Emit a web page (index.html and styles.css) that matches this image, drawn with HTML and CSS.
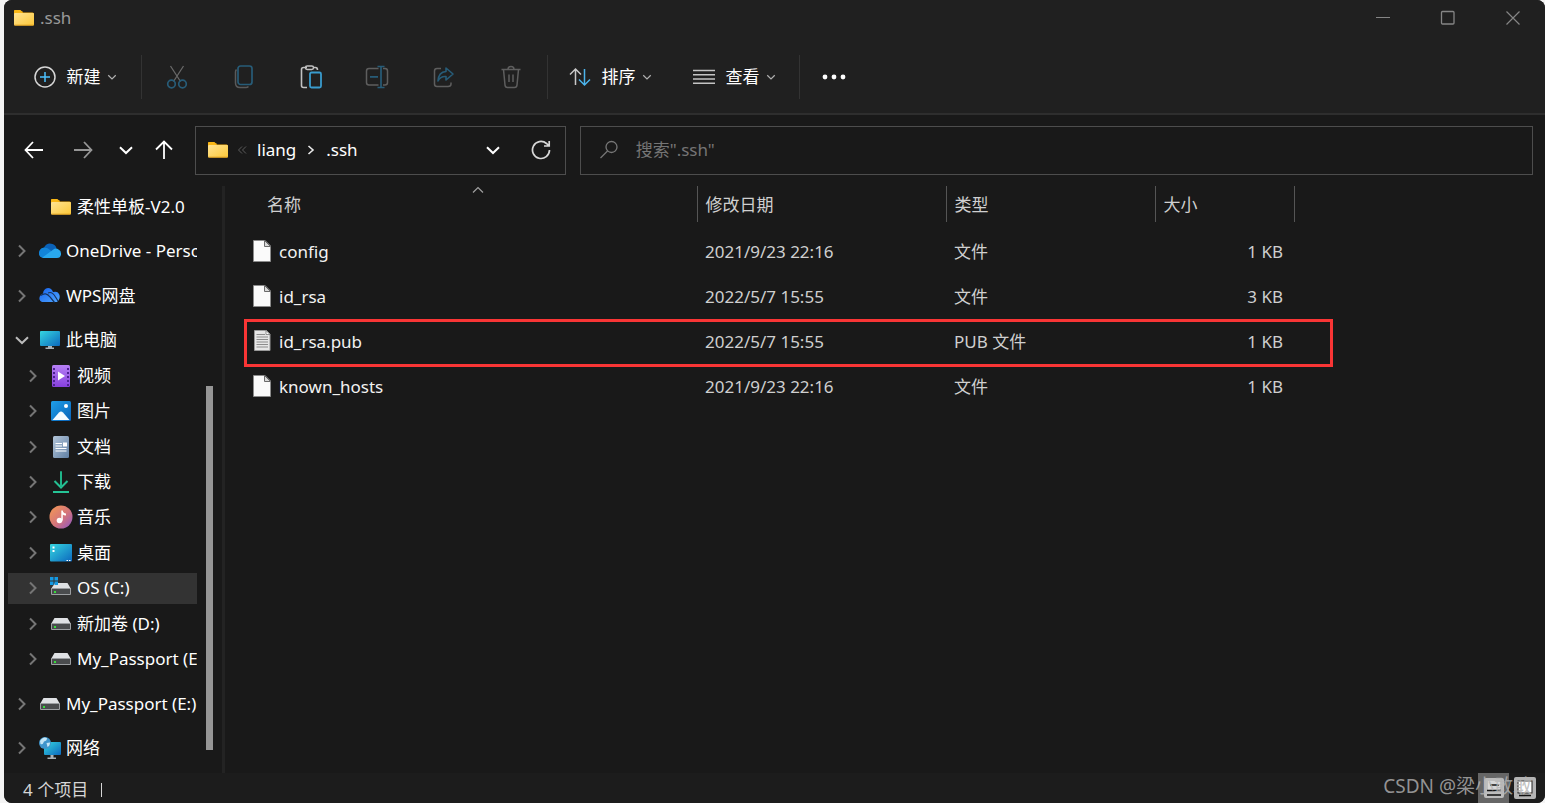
FILE: index.html
```html
<!DOCTYPE html>
<html lang="zh-CN">
<head>
<meta charset="utf-8">
<title>.ssh</title>
<link rel="stylesheet" href="styles.css">
</head>
<body>
<svg class="defs" width="0" height="0" aria-hidden="true">
  <defs>
    <linearGradient id="gFolder" x1="0" y1="0" x2="1" y2="1"><stop offset="0" stop-color="#ffe393"/><stop offset="1" stop-color="#fcc838"/></linearGradient>
    <linearGradient id="gScreen" x1="0" y1="0" x2="1" y2="1"><stop offset="0" stop-color="#35d6e0"/><stop offset="1" stop-color="#0c68be"/></linearGradient>
    <linearGradient id="gVideo" x1="0" y1="0" x2="0" y2="1"><stop offset="0" stop-color="#b680f5"/><stop offset="1" stop-color="#8640dc"/></linearGradient>
    <linearGradient id="gPic" x1="0" y1="0" x2="1" y2="1"><stop offset="0" stop-color="#1f9fe8"/><stop offset="1" stop-color="#0862b8"/></linearGradient>
    <linearGradient id="gDoc" x1="0" y1="0" x2="1" y2="1"><stop offset="0" stop-color="#b4c6da"/><stop offset="1" stop-color="#5f7fa3"/></linearGradient>
    <linearGradient id="gMusic" x1="0" y1="0" x2="1" y2="1"><stop offset="0" stop-color="#f59a52"/><stop offset=".55" stop-color="#d4747c"/><stop offset="1" stop-color="#8a55c8"/></linearGradient>
    <linearGradient id="gDown" x1="0" y1="0" x2="0" y2="1"><stop offset="0" stop-color="#1fae84"/><stop offset="1" stop-color="#25c496"/></linearGradient>
    <linearGradient id="gWps" x1="0" y1="0" x2="1" y2="1"><stop offset="0" stop-color="#1562ee"/><stop offset="1" stop-color="#4fa5ff"/></linearGradient>
    <symbol id="folder" viewBox="0 0 22 18"><path d="M1 2.500Q1 1 2.500 1H7.500L10 3.500H19.500Q21 3.500 21 5V8H1Z" fill="#f5ae12"/><rect x="1" y="4" width="20" height="12.500" rx="1" fill="url(#gFolder)"/><path d="M1 4H8L10 2.500H7V1H2Q1 1 1 2Z" fill="#f9b716"/><path d="M1.500 16.200H20.500" stroke="#dd9e20"/></symbol>
    <symbol id="right" viewBox="0 0 16 16"><path d="M5 2.500 10.500 8 5 13.500" fill="none" stroke="currentColor" stroke-width="2"/></symbol>
    <symbol id="down" viewBox="0 0 16 16"><path d="M2 5.200 8 11 14 5.200" fill="none" stroke="currentColor" stroke-width="2"/></symbol>
    <symbol id="onedrive" viewBox="0 0 24 18"><path d="M1 13Q0 7 6 5.500 9 0 14.500 2 18 3 18.500 6.500L9 13Z" fill="#0a62b8"/><path d="M5.500 16Q.5 15.500 1 10.500 2.200 6 6 5.800 9 5 12 8L16 12Z" fill="#1284d8"/><path d="M4 15.800 15 7.800Q18 5.300 20.500 7.600 23.500 8.600 23 12.500 22.500 16 19 16H6Z" fill="#29a8ee"/></symbol>
    <symbol id="wps" viewBox="0 0 24 18"><path d="M2 9Q3 7 5 6.500 5.500 1.500 10 1 13.500 1.200 15 5 20 3.500 21.500 8 22.500 12 19 15H4Q0 13 2 9Z" fill="url(#gWps)"/><path d="M2.500 8.500Q8 4.500 12 10L16.500 15.500" fill="none" stroke="#17335e" stroke-width="1.200"/><path d="M10 6Q14 4 17.500 10L20 14" fill="none" stroke="#17335e" stroke-width="1.200"/></symbol>
    <symbol id="pc" viewBox="0 0 22 20"><rect x="1" y="1" width="20" height="15" rx="1" fill="url(#gScreen)"/><path d="M9 16h4v1.500h2V19H6.500v-1.500H9z" fill="#a9b2b8"/></symbol>
    <symbol id="video" viewBox="0 0 24 24"><rect x="3" y="1" width="18" height="22" rx="1.500" fill="url(#gVideo)"/><path d="M5 4v18M19 4v18" stroke="#4c2091" stroke-width="2" stroke-dasharray="2 2"/><path d="M9 7.500 16 12 9 16.500Z" fill="#fff"/></symbol>
    <symbol id="picture" viewBox="0 0 24 24"><rect x="2" y="2" width="20" height="20" rx="1.500" fill="url(#gPic)"/><path d="M3.500 21 10 13.500Q12 11.500 14 13.500L20.500 21Z" fill="#f5fbff"/><circle cx="17" cy="7" r="2" fill="#fff"/></symbol>
    <symbol id="document" viewBox="0 0 24 24"><rect x="4" y="1" width="16" height="22" rx="1.500" fill="url(#gDoc)"/><path d="M6.500 8.500H13M6.500 11H13M6.500 13.500H17.500M6.500 16H17.500" stroke="#fff" stroke-width="1.200"/><rect x="14" y="7.500" width="4" height="4" fill="#fff"/></symbol>
    <symbol id="download" viewBox="0 0 24 24"><path d="M12 1.500V17M5.500 11 12 17.500 18.500 11" fill="none" stroke="url(#gDown)" stroke-width="2"/><path d="M12 1.500V17" stroke="#20b58a" stroke-width="2"/><path d="M4 22H20" stroke="#25c496" stroke-width="2"/></symbol>
    <symbol id="music" viewBox="0 0 24 24"><circle cx="12" cy="12" r="11.500" fill="url(#gMusic)"/><circle cx="10.500" cy="15.500" r="2.800" fill="#fff"/><path d="M12.300 15.500V5.500H13.800Q14 8 17 8.500V10.500Q14.500 10.500 13.800 9.500V15.500Z" fill="#fff"/></symbol>
    <symbol id="desktop" viewBox="0 0 24 20"><rect x="1" y="1" width="22" height="17.500" rx="1" fill="url(#gScreen)"/><path d="M3.500 3.500h2v2h-2zM3.500 7h2v2h-2zM17.500 17h1.500v1h-1.500zM20 17h1.500v1H20z" fill="#fff"/></symbol>
    <symbol id="drive" viewBox="0 0 22 16"><path d="M4.500 2H17.500L21 8H1Z" fill="#dfe1e4"/><rect x="1" y="7" width="20" height="7" rx="1" fill="#9c9fa2"/><rect x="2" y="8" width="18" height="5" fill="#4a4c4e"/><rect x="4" y="10" width="2" height="2" fill="#35e03a"/></symbol>
    <symbol id="osdrive" viewBox="0 0 24 22"><path d="M6 6H18.500L22 12H2Z" fill="#dfe1e4"/><rect x="2" y="11" width="20" height="7" rx="1" fill="#9c9fa2"/><rect x="3" y="12" width="18" height="5" fill="#4a4c4e"/><rect x="5" y="14" width="2" height="2" fill="#35e03a"/><path d="M1 0h3.500v3.500H1zM5.500 0H9v3.500H5.500zM1 4.500h3.500V8H1zM5.500 4.500H9V8H5.500z" fill="#159ae4"/></symbol>
    <symbol id="network" viewBox="0 0 24 24"><rect x="6" y="6" width="17" height="13" rx="1" fill="url(#gScreen)"/><path d="M12.500 19h3v2.500H18V23H9.500v-1.500h3z" fill="#a9b2b8"/><circle cx="7" cy="7" r="6" fill="#3f95cc"/><path d="M2 5Q5 0 9 2 9 5 6 5.500 5 9 2.500 8ZM8.500 7 12 6.500Q12 10 9.500 11Z" fill="#c4e5f5"/></symbol>
    <symbol id="file" viewBox="0 0 20 24"><path d="M1.500 .5H13L18.500 6V21.500H1.500Z" fill="#fafafa" stroke="#8b8b8b"/><path d="M12.500 .5V6.500H18.500Z" fill="#d8d8d8" stroke="#6a6a6a"/></symbol>
    <symbol id="textfile" viewBox="0 0 20 24"><path d="M2.500 .5H14.500L18 4V20.500H2.500Z" fill="#e6e6e6" stroke="#999"/><path d="M4.500 4.500H13M4.500 7H16M4.500 9.500H16M4.500 12H16M4.500 14.500H16M4.500 17H16" stroke="#8c8c8c"/><path d="M14 .5V4.500H18Z" fill="#fff" stroke="#777" stroke-width=".8"/></symbol>
  </defs>
</svg>

<div class="window">
  <header class="titlebar">
    <svg class="i-folder"><use href="#folder"/></svg>
    <h1 class="title">.ssh</h1>
    <div class="controls">
      <button aria-label="最小化"><svg width="16" height="16"><path d="M1 7.500H15" stroke="#858585"/></svg></button>
      <button aria-label="最大化"><svg width="16" height="16"><rect x="1.500" y="1.500" width="12.500" height="12.500" rx="1" fill="none" stroke="#858585" stroke-width="1.300"/></svg></button>
      <button aria-label="关闭"><svg width="16" height="16"><path d="M1.500 1.500 14.500 14.500M14.500 1.500 1.500 14.500" stroke="#858585" stroke-width="1.200"/></svg></button>
    </div>
  </header>

  <div class="commands">
    <button class="cmd cmd-new"><svg width="24" height="24"><circle cx="12" cy="12" r="10" fill="none" stroke="#d6d6d6" stroke-width="1.500"/><path d="M12 7V17M7 12H17" stroke="#4cc2ff" stroke-width="1.500"/></svg><span>新建</span><svg class="i-small"><use href="#down"/></svg></button>
    <span class="rule"></span>
    <div class="tools">
      <button aria-label="剪切" disabled><svg width="24" height="26"><path d="M5.500 2 15.500 17.500M18.500 2 8.500 17.500" stroke="#686868" stroke-width="1.300"/><g fill="none" stroke="#275c78" stroke-width="1.700"><circle cx="6.500" cy="20" r="3.800"/><circle cx="17.500" cy="20" r="3.800"/></g></svg></button>
      <button aria-label="复制" disabled><svg width="24" height="26"><path d="M4.500 5.500Q3.500 6.500 3.500 8V19Q3.500 23.500 8 23.500H14Q15.500 23.500 16.500 22.500" fill="none" stroke="#5a5a5a" stroke-width="1.500"/><rect x="6" y="2" width="14" height="18.500" rx="2.500" fill="none" stroke="#275c78" stroke-width="1.700"/></svg></button>
      <button aria-label="粘贴"><svg width="24" height="26"><path d="M8 3.500H4.500Q2.500 3.500 2.500 5.500V21.500Q2.500 23.500 4.500 23.500H8M14 3.500H16.500Q18.500 3.500 18.500 6" fill="none" stroke="#c2c2c2" stroke-width="1.600"/><rect x="6.500" y="2" width="8" height="3.500" rx="1.700" fill="none" stroke="#c2c2c2" stroke-width="1.500"/><rect x="11" y="8.500" width="11" height="15" rx="1.500" fill="none" stroke="#399bcd" stroke-width="1.800"/></svg></button>
      <button aria-label="重命名" disabled><svg width="24" height="26"><path d="M13.500 4.500H4Q1.500 4.500 1.500 7V18.500Q1.500 21 4 21H13.500M18 4.500H20Q22.500 4.500 22.500 7V18.500Q22.500 21 20 21H18" fill="none" stroke="#5e5e5e" stroke-width="1.500"/><path d="M5 12.800H13M12.500 2.500H19.500M16 2.500V23.500M12.500 23.500H19.500" fill="none" stroke="#275c78" stroke-width="1.700"/></svg></button>
      <button aria-label="共享" disabled><svg width="24" height="26"><path d="M9 4.500H5Q2.500 4.500 2.500 7V20Q2.500 22.500 5 22.500H16Q19 22.500 19 20V18.500" fill="none" stroke="#5e5e5e" stroke-width="1.500"/><path d="M14 4 21 10 14 16V12.500Q8.500 12 6 17 6.500 8 14 7.500Z" fill="none" stroke="#275c78" stroke-width="1.600" stroke-linejoin="round"/></svg></button>
      <button aria-label="删除" disabled><svg width="24" height="26"><path d="M2.500 5.500H21.500M9 5.500Q9 2.500 12 2.500T15 5.500M4.500 5.500 6 21Q6.200 23.500 8.500 23.500H15.500Q17.800 23.500 18 21L19.500 5.500M10 10.500V18M14 10.500V18" fill="none" stroke="#5e5e5e" stroke-width="1.500"/></svg></button>
    </div>
    <span class="rule"></span>
    <button class="cmd cmd-sort"><svg width="24" height="24"><path d="M7.500 20V4M2 9.500 7.500 4 13 9.500" fill="none" stroke="#c8c8c8" stroke-width="1.500"/><path d="M16.500 4V20M11 14.500 16.500 20 22 14.500" fill="none" stroke="#4cb4ec" stroke-width="1.500"/></svg><span>排序</span><svg class="i-small"><use href="#down"/></svg></button>
    <button class="cmd cmd-view"><svg width="24" height="24"><path d="M1 5.500H23M1 9.700H23M1 14H23M1 18.300H23" stroke="#c4c4c4" stroke-width="1.400"/></svg><span>查看</span><svg class="i-small"><use href="#down"/></svg></button>
    <span class="rule"></span>
    <button class="cmd cmd-more" aria-label="更多"><svg width="24" height="6"><g fill="#fff"><circle cx="3" cy="3" r="2.400"/><circle cx="12" cy="3" r="2.400"/><circle cx="21" cy="3" r="2.400"/></g></svg></button>
  </div>

  <div class="navbar">
    <div class="history">
      <button aria-label="后退"><svg width="20" height="20"><path d="M19 10H2M9 2 1.500 10 9 18" fill="none" stroke="#fff" stroke-width="1.800"/></svg></button>
      <button aria-label="前进"><svg width="20" height="20"><path d="M1 10H18M11 2 18.500 10 11 18" fill="none" stroke="#969696" stroke-width="1.800"/></svg></button>
      <button aria-label="最近"><svg class="i-chev"><use href="#down"/></svg></button>
      <button aria-label="向上"><svg width="20" height="20"><path d="M10 19V2M2 9.500 10 1.500 18 9.500" fill="none" stroke="#fff" stroke-width="1.800"/></svg></button>
    </div>
    <div class="fields">
      <div class="address">
        <svg class="i-folder"><use href="#folder"/></svg>
        <svg class="i-more" width="10" height="10"><path d="M5 1.500 1.500 5 5 8.500M9 1.500 5.500 5 9 8.500" fill="none" stroke="#5c5c5c"/></svg>
        <a href="#liang">liang</a>
        <svg class="i-sep" width="10" height="12"><path d="M2.500 2 7 6 2.500 10" fill="none" stroke="#e8e8e8" stroke-width="1.600"/></svg>
        <a href="#ssh">.ssh</a>
        <div class="address-tools">
          <button aria-label="历史"><svg class="i-chev"><use href="#down"/></svg></button>
          <button aria-label="刷新"><svg width="20" height="20"><path d="M18.500 10A8.500 8.500 0 1 1 15.500 3.500L18 6M18.200 1V6H13" fill="none" stroke="#d8d8d8" stroke-width="1.700"/></svg></button>
        </div>
      </div>
      <label class="search">
        <svg width="20" height="20"><circle cx="12.500" cy="7" r="5.500" fill="none" stroke="#777" stroke-width="1.300"/><path d="M8.500 11 1.500 18" stroke="#777" stroke-width="1.300"/></svg>
        <input type="text" aria-label="搜索" placeholder='搜索".ssh"'>
      </label>
    </div>
  </div>

  <div class="body">
    <nav class="sidebar">
      <ul class="tree">
        <li class="group child"><a class="node" href="#v2"><span class="i-chev"></span><svg class="icon i-folder"><use href="#folder"/></svg><span>柔性单板-V2.0</span></a></li>
        <li class="group"><a class="node" href="#onedrive-home"><svg class="i-chev"><use href="#right"/></svg><svg class="icon"><use href="#onedrive"/></svg><span>OneDrive - Personal</span></a></li>
        <li class="group"><a class="node" href="#wps-home"><svg class="i-chev"><use href="#right"/></svg><svg class="icon"><use href="#wps"/></svg><span>WPS网盘</span></a></li>
        <li class="group group-pc">
          <div class="group"><a class="node open" href="#this-pc"><svg class="i-chev"><use href="#down"/></svg><svg class="icon i-pc"><use href="#pc"/></svg><span>此电脑</span></a></div>
          <ul class="children">
            <li class="child"><a class="node" href="#videos"><svg class="i-chev"><use href="#right"/></svg><svg class="icon"><use href="#video"/></svg><span>视频</span></a></li>
            <li class="child"><a class="node" href="#pictures"><svg class="i-chev"><use href="#right"/></svg><svg class="icon"><use href="#picture"/></svg><span>图片</span></a></li>
            <li class="child"><a class="node" href="#documents"><svg class="i-chev"><use href="#right"/></svg><svg class="icon"><use href="#document"/></svg><span>文档</span></a></li>
            <li class="child"><a class="node" href="#downloads"><svg class="i-chev"><use href="#right"/></svg><svg class="icon"><use href="#download"/></svg><span>下载</span></a></li>
            <li class="child"><a class="node" href="#songs"><svg class="i-chev"><use href="#right"/></svg><svg class="icon"><use href="#music"/></svg><span>音乐</span></a></li>
            <li class="child"><a class="node" href="#desk"><svg class="i-chev"><use href="#right"/></svg><svg class="icon"><use href="#desktop"/></svg><span>桌面</span></a></li>
            <li class="child"><a class="node selected" href="#c"><svg class="i-chev"><use href="#right"/></svg><svg class="icon"><use href="#osdrive"/></svg><span>OS (C:)</span></a></li>
            <li class="child"><a class="node" href="#d"><svg class="i-chev"><use href="#right"/></svg><svg class="icon i-drive"><use href="#drive"/></svg><span>新加卷 (D:)</span></a></li>
            <li class="child"><a class="node" href="#e"><svg class="i-chev"><use href="#right"/></svg><svg class="icon i-drive"><use href="#drive"/></svg><span>My_Passport (E:)</span></a></li>
          </ul>
        </li>
        <li class="group"><a class="node" href="#e-root"><svg class="i-chev"><use href="#right"/></svg><svg class="icon i-drive"><use href="#drive"/></svg><span>My_Passport (E:)</span></a></li>
        <li class="group"><a class="node" href="#net"><svg class="i-chev"><use href="#right"/></svg><svg class="icon"><use href="#network"/></svg><span>网络</span></a></li>
      </ul>
      <div class="track"><div class="thumb"></div></div>
    </nav>

    <main class="files">
      <table>
        <colgroup><col class="c-name"><col class="c-date"><col class="c-type"><col class="c-size"></colgroup>
        <thead>
          <tr><th class="name">名称<svg class="sort" width="12" height="8"><path d="M1 6.500 6 1.500 11 6.500" fill="none" stroke="#a0a0a0" stroke-width="1.200"/></svg></th><th>修改日期</th><th>类型</th><th>大小</th></tr>
        </thead>
        <tbody>
          <tr><td class="name"><div class="file"><svg><use href="#file"/></svg>config</div></td><td>2021/9/23 22:16</td><td>文件</td><td class="size">1 KB</td></tr>
          <tr><td class="name"><div class="file"><svg><use href="#file"/></svg>id_rsa</div></td><td>2022/5/7 15:55</td><td>文件</td><td class="size">3 KB</td></tr>
          <tr class="marked"><td class="name"><div class="file"><svg><use href="#textfile"/></svg>id_rsa.pub</div><span class="mark"></span></td><td>2022/5/7 15:55</td><td>PUB 文件</td><td class="size">1 KB</td></tr>
          <tr><td class="name"><div class="file"><svg><use href="#file"/></svg>known_hosts</div></td><td>2021/9/23 22:16</td><td>文件</td><td class="size">1 KB</td></tr>
        </tbody>
      </table>
    </main>
  </div>

  <footer class="status">
    <span>4 个项目</span><span class="bar"></span>
    <div class="views">
      <button class="active" aria-label="详细信息"><svg width="22" height="22"><rect x="1" y="1" width="20" height="20" rx="2" fill="#bdbdbd"/><rect x="5" y="4" width="12" height="10" fill="#d8d8d8"/><path d="M7 8H16M4 13.500H18M4 18H18" stroke="#111" stroke-width="1.600"/></svg></button>
      <button aria-label="大图标"><svg width="24" height="24"><rect x="1" y="1" width="22" height="22" rx="2" fill="#b4b4b4"/><rect x="5" y="5" width="14" height="12" fill="#fff" stroke="#222"/><path d="M6 19.500H18" stroke="#111" stroke-width="1.600"/></svg></button>
    </div>
    <span class="watermark">CSDN @梁小敢敢</span>
  </footer>
</div>
</body>
</html>
```
FILE: styles.css
```css
* { box-sizing: border-box; }
html, body { height: 100%; margin: 0; }
body {
  padding-left: 4px;
  background: #f4f4f4;
  color: #fff;
  font: 17px/24px "Noto Sans", "Noto Sans CJK SC", sans-serif;
  overflow: hidden;
}
.defs { position: absolute; }
svg { display: block; flex: none; }
ul { margin: 0; padding: 0; list-style: none; }
a { color: inherit; text-decoration: none; }
button {
  display: flex; align-items: center; justify-content: center;
  padding: 0; border: 0; background: none; color: inherit; font: inherit;
}
.window {
  display: flex; flex-direction: column; height: 100%;
  background: #191919; border-radius: 8px; overflow: hidden;
}
.i-folder { width: 22px; height: 18px; }
.i-chev { width: 16px; height: 16px; }
.i-small { width: 10px; height: 10px; color: #b0b0b0; }

.titlebar { display: flex; align-items: center; height: 36px; padding-left: 9px; background: #202020; }
.title { margin: 0 0 0 5px; font-size: 17px; font-weight: 400; color: #999; }
.controls { display: flex; margin-left: auto; }
.controls button { width: 65px; height: 36px; }

.commands { display: flex; align-items: center; height: 79px; padding-top: 4px; background: #202020; border-bottom: 2px solid #2e2e2e; }
.cmd { gap: 10px; height: 44px; }
.cmd .i-small { margin-left: -4px; }
.cmd-new { width: 137px; padding-left: 4px; }
.rule { width: 1px; height: 44px; background: #333; }
.tools { display: flex; width: 405px; padding: 0 3px 0 2px; }
.tools button { flex: 1; height: 44px; }
.cmd-sort { width: 123px; }
.cmd-view { width: 128px; padding-right: 3px; }
.cmd-more { width: 68px; }

.navbar { display: flex; align-items: center; height: 70px; padding-right: 12px; }
.history { display: flex; width: 191px; padding-left: 5px; }
.history button { width: 49px; height: 40px; }
.history button:nth-child(n+3) { width: 40px; }
.history button:nth-child(3) { width: 37px; }
.fields { flex: 1; display: grid; grid-template-columns: 7fr 18fr; gap: 14px; }
.address, .search { display: flex; align-items: center; height: 49px; border: 1px solid #4d4d4d; }
.address { padding-left: 11px; }
.i-more { margin: 0 10px 0 8px; }
.i-sep { margin: 0 10px; }
.address-tools { display: flex; margin-left: auto; }
.address-tools button { width: 48px; height: 40px; }
.search { padding-left: 18px; gap: 17px; }
.search input { flex: 1; min-width: 0; padding: 0; border: 0; outline: 0; background: none; color: #fff; font: inherit; }
.search input::placeholder { color: #757575; opacity: 1; }

.body { flex: 1; display: flex; min-height: 0; padding-top: 1px; }
.sidebar { display: flex; width: 221px; border-right: 3px solid #232323; }
.tree { display: flex; flex-direction: column; gap: 9px; width: 193px; padding: 3px 0 7px 4px; overflow: hidden; }
.group { flex: 1; display: flex; flex-direction: column; justify-content: center; min-height: 0; }
.group-pc { flex: 10; }
.children { flex: 9; display: flex; flex-direction: column; justify-content: space-around; }
.node { display: flex; align-items: center; height: 31px; padding-left: 6px; white-space: nowrap; overflow: hidden; }
.node .i-chev { flex: none; margin-right: 8px; color: #757575; }
.node.open .i-chev { color: #bbb; }
.icon { width: 24px; height: 24px; margin-right: 4px; }
.icon.i-folder, .icon.i-drive, .icon.i-pc { width: 22px; height: 18px; margin: 0 5px 0 1px; }
.icon.i-pc { height: 20px; }
.child .node { padding-left: 17px; }
.selected { background: #333; }
.track { display: flex; flex-direction: column; padding: 200px 0 23px 9px; }
.thumb { flex: 1; width: 7px; background: #969696; }

.files { flex: 1; min-width: 0; padding-left: 19px; }
table { table-layout: fixed; width: 1050px; border-collapse: collapse; }
.c-name { width: 453px; }
.c-date { width: 249px; }
.c-type { width: 209px; }
.c-size { width: 139px; }
th, td { padding: 0 11px 0 8px; text-align: left; font-weight: 400; color: #cfcfcf; white-space: nowrap; }
th { height: 36px; padding-top: 2px; border-right: 1px solid #555; position: relative; }
th.name { padding-left: 23px; }
.sort { position: absolute; left: 228px; top: 0; }
tbody::before { content: ""; display: block; height: 7px; }
td { height: 45px; }
td.name { color: #f2f2f2; }
.file { display: flex; align-items: center; gap: 7px; }
.file svg { width: 20px; height: 24px; }
td.size { text-align: right; }
.marked { position: relative; }
.mark { position: absolute; inset: 0 -39px -3px 0; border: 3px solid #f93535; }

.status { position: relative; display: flex; align-items: center; height: 30px; padding: 3px 8px 0 19px; background: #1c1c1c; color: #d5d5d5; }
.bar { width: 1px; height: 14px; margin-left: 13px; background: #d5d5d5; }
.views { display: flex; gap: 4px; margin: -3px 0 0 auto; }
.views button { width: 31px; height: 30px; }
.views button + button { width: 24px; }
.views .active { background: #666; }
.watermark { position: absolute; right: 13px; bottom: 5px; color: rgba(180, 180, 180, .8); font-size: 19px; white-space: nowrap; }
```
